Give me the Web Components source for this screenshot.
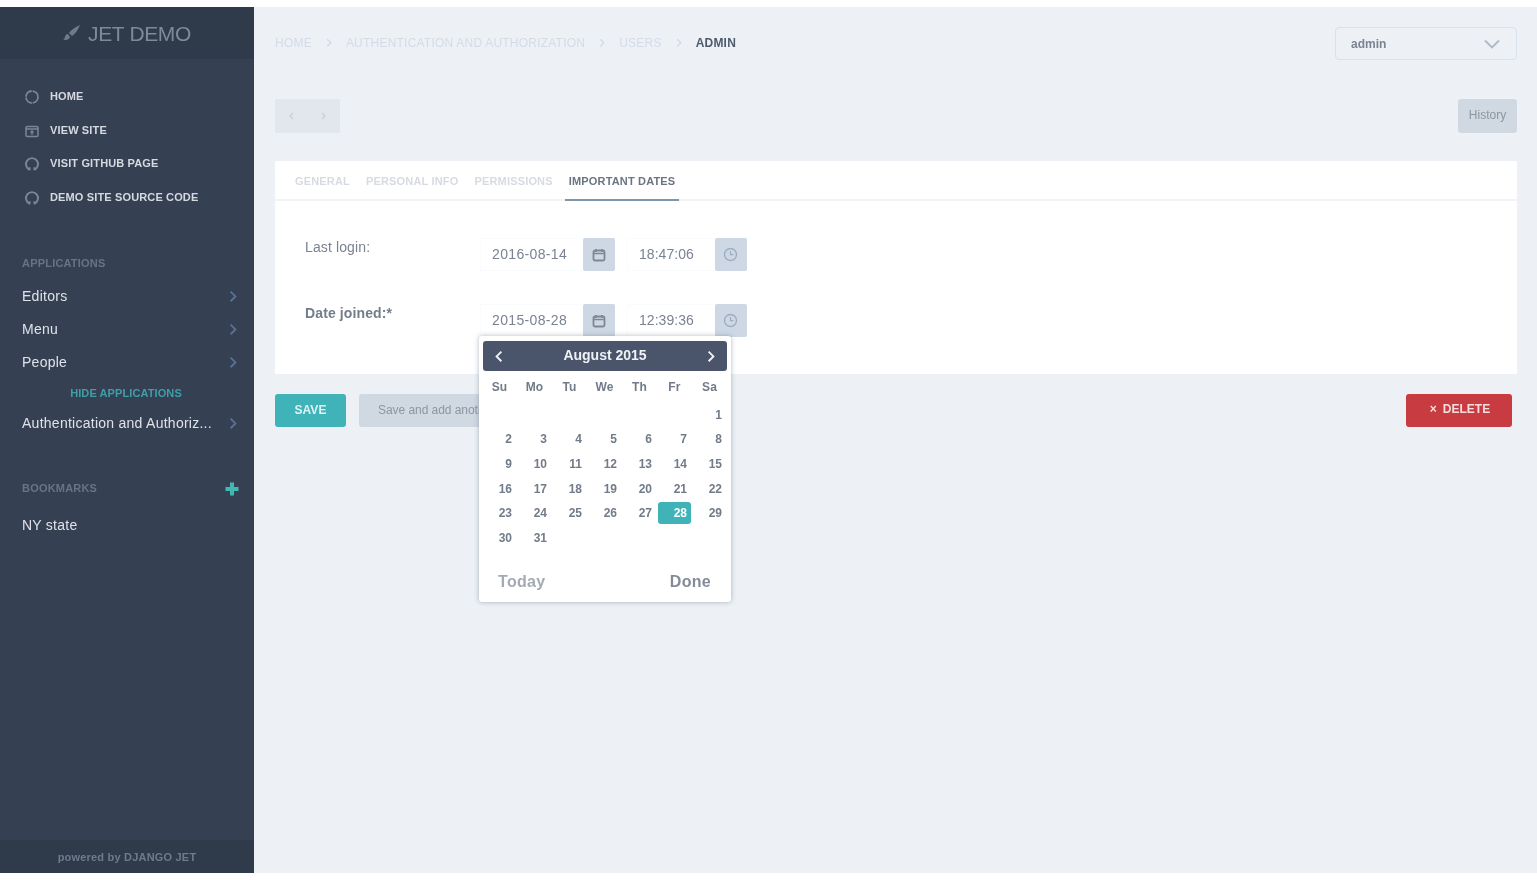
<!DOCTYPE html>
<html lang="en">
<head>
<meta charset="utf-8">
<title>JET DEMO</title>
<style>
  html, body { margin: 0; height: 100%; background: #fff; overflow: hidden; }
  body { padding-top: 7px; box-sizing: border-box; font-family: "Liberation Sans", Arial, sans-serif; }
</style>
</head>
<body>
<x-app>
  <x-sidebar slot="side">
    <x-side-link label="HOME" icon="home"></x-side-link>
    <x-side-link label="VIEW SITE" icon="site"></x-side-link>
    <x-side-link label="VISIT GITHUB PAGE" icon="github"></x-side-link>
    <x-side-link label="DEMO SITE SOURCE CODE" icon="github"></x-side-link>
    <x-side-group label="APPLICATIONS" style="margin-top:39px;--head-gap:7px">
      <x-side-app label="Editors"></x-side-app>
      <x-side-app label="Menu"></x-side-app>
      <x-side-app label="People"></x-side-app>
      <x-side-hide>HIDE APPLICATIONS</x-side-hide>
      <x-side-app label="Authentication and Authoriz..."></x-side-app>
    </x-side-group>
    <x-side-group label="BOOKMARKS" plus style="margin-top:38px;--head-gap:11px">
      <x-side-app label="NY state" plain></x-side-app>
    </x-side-group>
  </x-sidebar>
  <x-main>
    <x-topbar>
      <x-crumbs></x-crumbs>
      <x-user-select>admin</x-user-select>
    </x-topbar>
    <x-toolbar></x-toolbar>
    <x-form-card>
      <x-tabs></x-tabs>
      <x-field label="Last login:" date="2016-08-14" time="18:47:06"></x-field>
      <x-field label="Date joined:*" date="2015-08-28" time="12:39:36" strong style="margin-top:33px">
        <x-calendar></x-calendar>
      </x-field>
    </x-form-card>
    <x-actions></x-actions>
  </x-main>
</x-app>
<script>
const ICONS = {
  home: '<circle cx="8" cy="8" r="6" fill="none" stroke="currentColor" stroke-width="1.8" stroke-dasharray="8.4 1"/>',
  site: '<rect x="2" y="3.5" width="12" height="10" rx="1" fill="none" stroke="currentColor" stroke-width="1.5"/><path d="M2 6h12M8 12V8M6.3 9.6 8 8l1.7 1.6" fill="none" stroke="currentColor" stroke-width="1.3"/>',
  github: '<path d="M5.5 13.6A6 6 0 1 1 10.5 13.6" fill="none" stroke="currentColor" stroke-width="1.9" stroke-linecap="round"/><path d="M5.8 13.4v-2.2M10.2 13.4v-2.2" stroke="currentColor" stroke-width="1.5"/>'
};
function def(name, css, html, init) {
  customElements.define(name, class extends HTMLElement {
    connectedCallback() {
      if (this.shadowRoot) return;
      const s = this.attachShadow({ mode: 'open' });
      const h = typeof html === 'function' ? html(this) : html;
      s.innerHTML = '<style>' + css + '</style>' + h;
      if (init) init(this, s);
    }
  });
}
const a = (el, n) => el.getAttribute(n) || '';
const chev = (c, w, dir) => `<svg width="${w}" height="${w*1.6}" viewBox="0 0 10 16" style="display:block"><path d="${dir==='l'?'M8 2 2 8l6 6':'M2 2l6 6-6 6'}" fill="none" stroke="${c}" stroke-width="2.4"/></svg>`;

def('x-app', `:host{display:flex;height:866px;background:#edf1f5;filter:blur(.45px)}`, `<slot name="side"></slot><slot></slot>`);

def('x-sidebar', `
  :host{display:flex;flex-direction:column;flex:0 0 254px;width:254px;background:#354052;color:#dfe3e9;box-sizing:border-box}
  header{height:52px;background:#2f3a4a;display:flex;align-items:center;justify-content:center;gap:7px;color:#7f8997;font-size:21px;letter-spacing:-.35px}
  header span{position:relative;top:1px}
  .links{flex:1;padding-top:20px;display:flex;flex-direction:column;min-height:0}
  footer{height:33px;background:#2f3a4a;display:flex;align-items:center;justify-content:center;color:#6f7a8b;font-size:11px;font-weight:bold;letter-spacing:.2px}
`, `<header><svg width="18" height="18" viewBox="0 0 18 18"><path d="M17 1C12 3 8 6 6 9l3 3c3-2 6-6 8-11zM5 10c-2 0-3 2-3 3 0 1-1 2-2 2 2 2 6 1 7-2z" fill="#707a89"/></svg><span>JET DEMO</span></header>
<div class="links"><slot></slot></div><footer>powered by DJANGO JET</footer>`);

def('x-side-link', `
  :host{display:flex;align-items:center;height:33.7px;padding-left:24px;gap:10px;color:#d5dae1;font-size:11px;font-weight:bold;letter-spacing:.14px}
  svg{flex:none;color:#7c8796;display:block;margin-top:2px}
`, el => `<svg width="16" height="16" viewBox="0 0 16 16">${ICONS[a(el,'icon')]}</svg><span>${a(el,'label')}</span>`);

def('x-side-group', `
  :host{display:block}
  .h{display:flex;align-items:center;justify-content:space-between;height:20px;padding:0 14px 0 22px;color:#68738a;font-size:11px;font-weight:bold;letter-spacing:.2px;margin-bottom:var(--head-gap,7px)}
  .p{color:#41b8b2;display:block;margin-top:2px}
`, el => `<div class="h"><span>${a(el,'label')}</span>${el.hasAttribute('plus')?'<svg class="p" width="16" height="16" viewBox="0 0 16 16"><path d="M8 1.5v13M1.5 8h13" stroke="currentColor" stroke-width="4"/></svg>':''}</div><slot></slot>`);

def('x-side-app', `
  :host{display:flex;align-items:center;justify-content:space-between;height:33px;padding:0 17px 0 22px;color:#dfe3e9;font-size:14px;letter-spacing:.26px}
`, el => `<span>${a(el,'label')}</span>${el.hasAttribute('plain')?'':chev('#5a6f94',8)}`);

def('x-side-hide', `:host{display:flex;justify-content:center;align-items:center;height:28px;color:#3f9fa6;font-size:11px;font-weight:bold;letter-spacing:.1px;padding-right:2px}`, `<slot></slot>`);

def('x-main', `:host{display:block;flex:1;min-width:0;padding:20px 20px 0 21px;box-sizing:border-box}`, `<slot></slot>`);

def('x-topbar', `:host{display:flex;align-items:center;justify-content:space-between;height:33px}`, `<slot></slot>`);

def('x-crumbs', `
  :host{display:flex;align-items:center;font-size:12px;letter-spacing:.22px;color:#d3dbe7;margin-top:-2px}
  i{font-style:normal;display:block;margin:0 14px}
  b{color:#4e5a6e;margin-left:0}
`, `<span>HOME</span><i>${chev('#d3dbe7',6)}</i><span>AUTHENTICATION AND AUTHORIZATION</span><i>${chev('#d3dbe7',6)}</i><span>USERS</span><i>${chev('#d3dbe7',6)}</i><b>ADMIN</b>`);

def('x-user-select', `
  :host{display:flex;align-items:center;justify-content:space-between;width:182px;height:33px;box-sizing:border-box;border:1px solid #d9e1ea;border-radius:4px;padding:0 16px 0 15px;color:#7a8391;font-size:12px;font-weight:bold}
`, `<slot></slot><svg width="16" height="10" viewBox="0 0 16 10" style="display:block"><path d="M1 1.5 8 8.5 15 1.5" fill="none" stroke="#aeb9c6" stroke-width="1.8"/></svg>`);

def('x-toolbar', `
  :host{display:flex;justify-content:space-between;margin-top:39px;height:34px}
  .nav{display:flex;align-items:center;justify-content:space-between;width:65px;background:#e2e7ed;border-radius:2px;padding:0 14px;box-sizing:border-box}
  .hist{display:flex;align-items:center;justify-content:center;width:59px;background:#d0d8e1;border-radius:3px;color:#8c96a3;font-size:12px;padding-bottom:2px;box-sizing:border-box}
`, `<div class="nav">${chev('#c6ced9',5,'l')}${chev('#c6ced9',5)}</div><div class="hist">History</div>`);

def('x-form-card', `
  :host{display:block;margin-top:28px;height:213px;background:#fff;position:relative}
`, `<slot></slot>`);

def('x-tabs', `
  :host{display:flex;height:40px;padding-left:20px;gap:16px;border-bottom:2px solid #f1f3f6;box-sizing:border-box;margin-bottom:37px;font-size:11px;font-weight:bold;letter-spacing:.17px;color:#d7dbe1}
  span{display:flex;align-items:center;height:40px}
  .on{color:#6b7484;border-bottom:2px solid #7d97ad;box-sizing:border-box;padding:2px 4px 0;margin-left:-4px}
`, `<span>GENERAL</span><span>PERSONAL INFO</span><span>PERMISSIONS</span><span class="on">IMPORTANT DATES</span>`);

def('x-field', `
  :host{display:flex;position:relative;height:33px;padding-left:30px;font-size:14px;color:#6f7886}
  label{width:175px;line-height:18px;flex:none;color:#7a8391;letter-spacing:.12px}
  .s{font-weight:bold;color:#747d8b}
  .in{border:1px solid #fafbfc;border-right:0;display:flex;align-items:center;box-sizing:border-box;padding-left:11px;letter-spacing:.35px;color:#7a8391;padding-bottom:1px}
  .d{width:103px}.t{width:88px;margin-left:12px;letter-spacing:.05px}
  .b{width:32px;background:#cdd8e4;display:flex;align-items:center;justify-content:center;border-radius:2px}
  svg{display:block}
`, el => `<label class="${el.hasAttribute('strong')?'s':''}">${a(el,'label')}</label>
<div class="in d">${a(el,'date')}</div>
<div class="b"><svg width="14" height="14" viewBox="0 0 14 14"><rect x="1.5" y="2.5" width="11" height="10" rx="1.5" fill="none" stroke="#7d8796" stroke-width="1.8"/><path d="M1.5 5.5h11M4 1v3M10 1v3" stroke="#7d8796" stroke-width="1.6"/></svg></div>
<div class="in t">${a(el,'time')}</div>
<div class="b"><svg width="15" height="15" viewBox="0 0 15 15" style="margin:-1px 2px 0 0"><circle cx="7.5" cy="7.5" r="6" fill="none" stroke="#9dadc0" stroke-width="1.4"/><path d="M7.5 4v3.7h3" fill="none" stroke="#9dadc0" stroke-width="1.2"/></svg></div>
<slot></slot>`);

def('x-calendar', `
  :host{position:absolute;left:204px;top:32px;width:252px;height:266px;background:#fff;border-radius:3px;box-shadow:0 0 5px rgba(80,95,115,.45);z-index:5;display:flex;flex-direction:column;box-sizing:border-box;padding:5px 4px 0;color:#727b89;font-weight:bold;font-size:12px}
  .hd{height:30px;flex:none;background:#4a556b;border-radius:3px;display:flex;align-items:center;justify-content:space-between;padding:0 12px;color:#eef1f5;font-size:14px}
  .hd span{position:relative;top:-1px}
  .grid{display:grid;grid-template-columns:repeat(7,35px);margin-left:-1px;width:245px}
  .wk{height:31.5px;align-items:center}
  .wk span{text-align:center;letter-spacing:.2px}
  .days{grid-auto-rows:24.6px}
  .days span{display:flex;align-items:center;justify-content:flex-end;box-sizing:border-box;margin:1.3px 1px;padding-right:4px}
  .sel{background:#3fb3b8;color:#fff;border-radius:3px}
  .ft{display:flex;justify-content:space-between;padding:22.5px 16px 0 15px;font-size:16px;color:#a3aab4;letter-spacing:.3px}
  .ft b:last-child{color:#838b98}
`, () => {
  let d = '';
  for (let i = 0; i < 6; i++) d += '<span></span>';
  for (let i = 1; i <= 31; i++) d += `<span${i===28?' class="sel"':''}>${i}</span>`;
  return `<div class="hd">${chev('#eef1f5',8,'l')}<span>August 2015</span>${chev('#eef1f5',8)}</div>
  <div class="grid wk"><span>Su</span><span>Mo</span><span>Tu</span><span>We</span><span>Th</span><span>Fr</span><span>Sa</span></div>
  <div class="grid days">${d}</div><div class="ft"><b>Today</b><b>Done</b></div>`;
});

def('x-actions', `
  :host{display:flex;align-items:flex-start;margin-top:20px;height:33px;padding-right:5px;font-size:12px}
  div{height:33px;display:flex;align-items:center;justify-content:center;border-radius:3px;box-sizing:border-box;padding-bottom:2px}
  .s{width:71px;background:#3fb3b8;color:#dff3f3;font-weight:bold}
  .a{background:#d0d8e2;color:#8c96a3;margin-left:13px;padding:0 19px 1px;white-space:nowrap;letter-spacing:-.05px}
  .d{margin-left:auto;width:106px;background:#c83b40;color:#f6dcdc;font-weight:bold;gap:6px;padding-left:2px;padding-bottom:3px}
`, `<div class="s">SAVE</div><div class="a">Save and add another</div><div class="d"><span>×</span><span>DELETE</span></div>`);
</script>
</body>
</html>
